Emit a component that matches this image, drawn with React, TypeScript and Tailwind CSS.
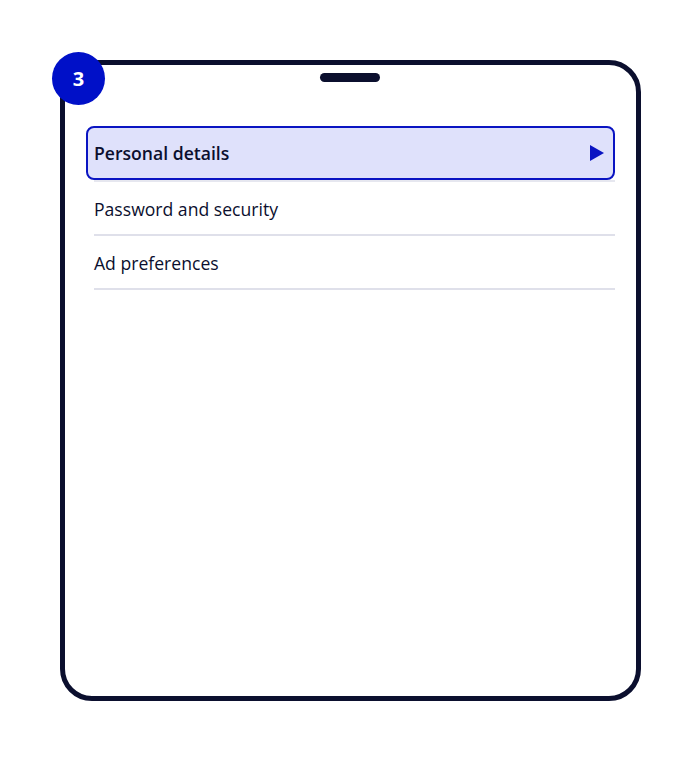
const ITEMS = ['Personal details', 'Password and security', 'Ad preferences'];

function Row({ label, selected }: { label: string; selected: boolean }) {
  if (selected) {
    return (
      <div className="flex flex-col">
        <div className="flex h-[54px] items-center justify-between rounded-lg border-2 border-[#0a14c2] bg-[#dfe1fb] pl-[6px] pr-[9px]">
          <span className="text-[17.6px] font-semibold text-[#0b0f2e]">{label}</span>
          <svg width="14" height="16" viewBox="0 0 14 16" className="shrink-0">
            <path d="M0 0 L14 8 L0 16 Z" fill="#0a14c2" />
          </svg>
        </div>
        <div className="ml-2 h-[2px] bg-[#e6e7ef]" />
      </div>
    );
  }
  return (
    <div className="ml-2 flex h-[54px] items-center border-b-2 border-[#dfe0ea] pt-[2px]">
      <span className="text-[17.6px] text-[#0b0f2e]">{label}</span>
    </div>
  );
}

export default function App() {
  return (
    <div
      className="min-h-[780px] w-[700px] bg-white pl-[60px] pt-[60px]"
      style={{ fontFamily: '"Open Sans", "Noto Sans", sans-serif' }}
    >
      <div className="relative h-[641px] w-[581px] rounded-[32px] border-[5px] border-[#0b0f2e] bg-white px-[21px] pt-[61px]">
        {/* step badge */}
        <div className="absolute left-[-13px] top-[-13px] flex h-[53px] w-[53px] items-center justify-center rounded-full bg-[#0010c8]">
          <span className="text-[20px] font-bold text-white">3</span>
        </div>
        {/* grabber */}
        <div className="absolute left-[255px] top-[8px] h-[9px] w-[60px] rounded-full bg-[#0b0f2e]" />
        <div className="flex flex-col">
          {ITEMS.map((label, i) => (
            <Row key={label} label={label} selected={i === 0} />
          ))}
        </div>
      </div>
    </div>
  );
}
